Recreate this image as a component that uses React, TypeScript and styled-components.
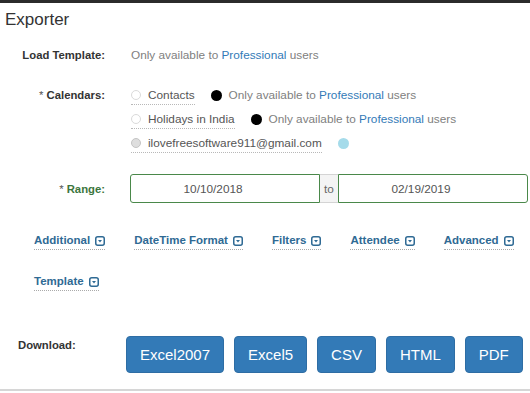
import React from "react";
import styled, { createGlobalStyle } from "styled-components";

const GlobalStyle = createGlobalStyle`
  html, body { margin: 0; padding: 0; background: #fff; }
  body {
    font-family: "Liberation Sans", Arial, Helvetica, sans-serif;
    width: 530px;
    height: 393px;
    overflow: hidden;
    color: #333;
  }
`;

const Page = styled.div`
  width: 530px;
  height: 393px;
  display: flex;
  flex-direction: column;
`;

const TopBar = styled.div`
  height: 3px;
  background: #2b2b2b;
`;

const Title = styled.h1`
  margin: 7px 0 0 5px;
  font-size: 17px;
  line-height: 20px;
  font-weight: normal;
  color: #333;
`;

const FieldRow = styled.div<{ $mt: number; $top?: boolean }>`
  display: flex;
  align-items: ${(p) => (p.$top ? "flex-start" : "center")};
  gap: 26px;
  margin-top: ${(p) => p.$mt}px;
`;

const Label = styled.div<{ $lh?: number }>`
  width: 105px;
  flex: none;
  text-align: right;
  font-size: 11.3px;
  font-weight: bold;
  line-height: ${(p) => p.$lh ?? 16}px;
  color: #333;
`;

const Req = styled.span`
  font-weight: normal;
  color: #555;
`;

const Success = styled.span`
  color: #3c763d;
`;

const Muted = styled.span`
  font-size: 11.8px;
  line-height: 16px;
  color: #808080;
`;

const Pro = styled.span`
  color: #337ab7;
`;

const OptionList = styled.div`
  display: flex;
  flex-direction: column;
`;

const OptionRow = styled.div`
  display: flex;
  align-items: center;
  height: 24px;
`;

const OptionLabel = styled.label`
  display: inline-flex;
  align-items: center;
  gap: 7px;
  font-size: 11.8px;
  line-height: 15px;
  color: #555;
  padding-bottom: 1px;
  border-bottom: 1px dotted #b8b8b8;
  margin-top: 2px;
`;

const Radio = styled.span<{ $disabled?: boolean }>`
  width: 8px;
  height: 8px;
  border-radius: 50%;
  border: 1px solid ${(p) => (p.$disabled ? "#c4c4c4" : "#dadada")};
  background: ${(p) => (p.$disabled ? "#dedede" : "#fff")};
  flex: none;
`;

const Dot = styled.span<{ $color: string }>`
  width: 11px;
  height: 11px;
  border-radius: 50%;
  background: ${(p) => p.$color};
  margin-left: 16px;
  margin-right: 7px;
  flex: none;
`;

const InputGroup = styled.div`
  display: flex;
  width: 398px;
  height: 29px;
  margin-left: -1px;
`;

const DateInput = styled.input<{ $side: "left" | "right" }>`
  flex: 1;
  min-width: 0;
  box-sizing: border-box;
  height: 29px;
  border: 1px solid #4a884a;
  border-radius: ${(p) => (p.$side === "left" ? "3px 0 0 3px" : "0 3px 3px 0")};
  font-family: "Liberation Sans", Arial, sans-serif;
  font-size: 11.8px;
  color: #555;
  text-align: center;
  padding: 0 24px 0 0;
  outline: none;
  background: #fff;
`;

const Addon = styled.span`
  display: flex;
  align-items: center;
  box-sizing: border-box;
  height: 29px;
  padding: 0 4px;
  font-size: 11.8px;
  color: #666;
  background: #f4f4f4;
  border-top: 1px solid #d4d4d4;
  border-bottom: 1px solid #d4d4d4;
`;

const Links = styled.div`
  display: flex;
  flex-wrap: wrap;
  column-gap: 29px;
  row-gap: 24px;
  padding-left: 34px;
  margin-top: 30px;
`;

const LinkItem = styled.a`
  display: inline-flex;
  align-items: center;
  gap: 5px;
  font-size: 11.5px;
  line-height: 15px;
  font-weight: bold;
  color: #2f6a94;
  text-decoration: none;
  padding-bottom: 1px;
  border-bottom: 1px dotted #aaa;
  cursor: pointer;
`;

const DownloadRow = styled.div`
  display: flex;
  align-items: flex-start;
  padding-left: 18px;
  margin-top: 45px;
`;

const DownloadLabel = styled.div`
  width: 108px;
  flex: none;
  font-size: 11.3px;
  font-weight: bold;
  line-height: 16px;
  color: #333;
  margin-top: 1px;
`;

const ButtonBar = styled.div`
  display: flex;
  gap: 10px;
`;

const Button = styled.button`
  height: 37px;
  padding: 0 13px;
  border: 1px solid #2e6da4;
  border-radius: 4px;
  background: #337ab7;
  color: #fff;
  font-family: "Liberation Sans", Arial, sans-serif;
  font-size: 15px;
  line-height: 20px;
  cursor: pointer;
`;

const BottomRule = styled.div`
  margin-top: 16px;
  height: 2px;
  background: #d6d6d6;
`;

const CaretBox = () => (
  <svg width="10" height="10" viewBox="0 0 10 10" aria-hidden="true">
    <rect x="0.75" y="0.75" width="8.5" height="8.5" rx="2" fill="none" stroke="currentColor" strokeWidth="1.5" />
    <polygon points="3,4 7,4 5,6.6" fill="currentColor" />
  </svg>
);

const ProNote = () => (
  <Muted>
    Only available to <Pro>Professional</Pro> users
  </Muted>
);

const calendars = [
  { name: "Contacts", dot: "#000", pro: true, disabled: false },
  { name: "Holidays in India", dot: "#000", pro: true, disabled: false },
  { name: "ilovefreesoftware911@gmail.com", dot: "#a5dbea", pro: false, disabled: true },
];

const links = ["Additional", "DateTime Format", "Filters", "Attendee", "Advanced", "Template"];
const formats = ["Excel2007", "Excel5", "CSV", "HTML", "PDF"];

export default function App() {
  return (
    <>
      <GlobalStyle />
      <Page>
        <TopBar />
        <Title>Exporter</Title>
        <FieldRow $mt={17}>
          <Label>Load Template:</Label>
          <ProNote />
        </FieldRow>
        <FieldRow $mt={20} $top>
          <Label $lh={24}>
            <Req>*</Req> Calendars:
          </Label>
          <OptionList>
            {calendars.map((c) => (
              <OptionRow key={c.name}>
                <OptionLabel>
                  <Radio $disabled={c.disabled} />
                  {c.name}
                </OptionLabel>
                <Dot $color={c.dot} />
                {c.pro && <ProNote />}
              </OptionRow>
            ))}
          </OptionList>
        </FieldRow>
        <FieldRow $mt={19}>
          <Label>
            <Req>*</Req> <Success>Range:</Success>
          </Label>
          <InputGroup>
            <DateInput $side="left" defaultValue="10/10/2018" />
            <Addon>to</Addon>
            <DateInput $side="right" defaultValue="02/19/2019" />
          </InputGroup>
        </FieldRow>
        <Links>
          {links.map((l) => (
            <LinkItem key={l}>
              {l}
              <CaretBox />
            </LinkItem>
          ))}
        </Links>
        <DownloadRow>
          <DownloadLabel>Download:</DownloadLabel>
          <ButtonBar>
            {formats.map((f) => (
              <Button key={f}>{f}</Button>
            ))}
          </ButtonBar>
        </DownloadRow>
        <BottomRule />
      </Page>
    </>
  );
}
